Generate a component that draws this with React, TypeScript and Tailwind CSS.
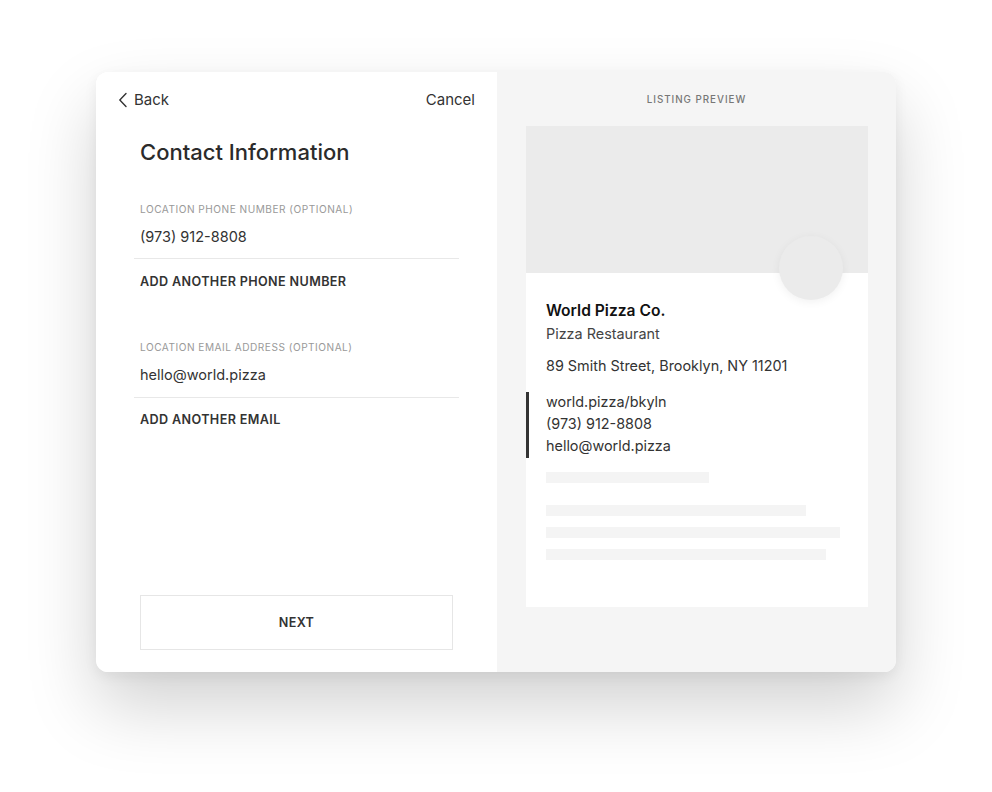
export default function App() {
  const sans = { fontFamily: '"Inter", "Liberation Sans", sans-serif' };
  return (
    <div className="flex min-h-[792px] w-full justify-center bg-white pt-[72px]" style={sans}>
      <div className="flex h-[600px] w-[800px] overflow-hidden rounded-xl bg-white shadow-[0_34px_70px_rgba(0,0,0,0.18),0_4px_14px_rgba(0,0,0,0.06)]">
        {/* left: form */}
        <section className="flex w-[401px] flex-col bg-white text-[#333]">
          <header className="flex h-[54px] items-center justify-between px-[22px] pt-[2px] text-[15px]">
            <button className="flex items-center gap-[6px]">
              <svg width="10" height="16" viewBox="0 0 10 16" fill="none">
                <path d="M8 1.5 1.8 8 8 14.5" stroke="#333" strokeWidth="1.4" strokeLinecap="round" strokeLinejoin="round" />
              </svg>
              <span>Back</span>
            </button>
            <button>Cancel</button>
          </header>

          <h1 className="mt-[12px] pl-[44px] text-[22px] font-medium leading-[28px] text-[#2b2b2b]">
            Contact Information
          </h1>

          <div className="ml-[38px] mt-[35px] w-[325px]">
            <div className="border-b border-[#e8e8e8] px-[6px] pb-[10px]">
              <p className="text-[10.1px] leading-[16px] tracking-[0.05em] text-[#999]">
                LOCATION PHONE NUMBER (OPTIONAL)
              </p>
              <p className="mt-[9px] text-[14.5px] leading-[22px]">(973) 912-8808</p>
            </div>
            <p className="mt-[14px] px-[6px] text-[12.6px] font-semibold leading-[18px] tracking-[0.03em]">
              ADD ANOTHER PHONE NUMBER
            </p>

            <div className="mt-[48px] border-b border-[#e8e8e8] px-[6px] pb-[11px]">
              <p className="text-[10.1px] leading-[16px] tracking-[0.05em] text-[#999]">
                LOCATION EMAIL ADDRESS (OPTIONAL)
              </p>
              <p className="mt-[9px] text-[14.5px] leading-[22px]">hello@world.pizza</p>
            </div>
            <p className="mt-[13px] px-[6px] text-[12.6px] font-semibold leading-[18px] tracking-[0.03em]">
              ADD ANOTHER EMAIL
            </p>
          </div>

          <button className="mx-[44px] mb-[22px] mt-auto h-[55px] w-[313px] border border-[#e6e6e6] pt-[2px] text-[12.6px] font-semibold tracking-[0.03em] text-[#333]">
            NEXT
          </button>
        </section>

        {/* right: preview */}
        <section className="flex flex-1 flex-col bg-[#f5f5f5]">
          <p className="flex h-[54px] items-center justify-center pt-[2px] text-[9.8px] font-medium tracking-[0.1em] text-[#777]">
            LISTING PREVIEW
          </p>
          <div className="relative ml-[29px] h-[481px] w-[342px] bg-white">
            <div className="h-[147px] bg-[#ebebeb]" />
            <div className="absolute left-[253px] top-[110px] h-[64px] w-[64px] rounded-full bg-[#ebebeb] shadow-[0_2px_10px_rgba(0,0,0,0.06)]" />
            <div className="px-[20px]">
              <h2 className="mt-[27px] text-[15.6px] font-semibold leading-[22px] text-[#111]">World Pizza Co.</h2>
              <p className="mt-[2px] text-[14.4px] leading-[20px] text-[#444]">Pizza Restaurant</p>
              <p className="mt-[12px] text-[14.4px] leading-[20px] text-[#333]">
                89 Smith Street, Brooklyn, NY 11201
              </p>
              <div className="-ml-[20px] mt-[16px] h-[66px] border-l-[3px] border-[#333] pl-[17px] text-[14.4px] leading-[22px] text-[#333]">
                <div className="-translate-y-[1px]">
                  <p>world.pizza/bkyln</p>
                  <p>(973) 912-8808</p>
                  <p>hello@world.pizza</p>
                </div>
              </div>
              <div className="mt-[14px] h-[11px] w-[163px] bg-[#f4f4f4]" />
              <div className="mt-[22px] h-[11px] w-[260px] bg-[#f4f4f4]" />
              <div className="mt-[11px] h-[11px] w-[294px] bg-[#f4f4f4]" />
              <div className="mt-[11px] h-[11px] w-[280px] bg-[#f4f4f4]" />
            </div>
          </div>
        </section>
      </div>
    </div>
  );
}
